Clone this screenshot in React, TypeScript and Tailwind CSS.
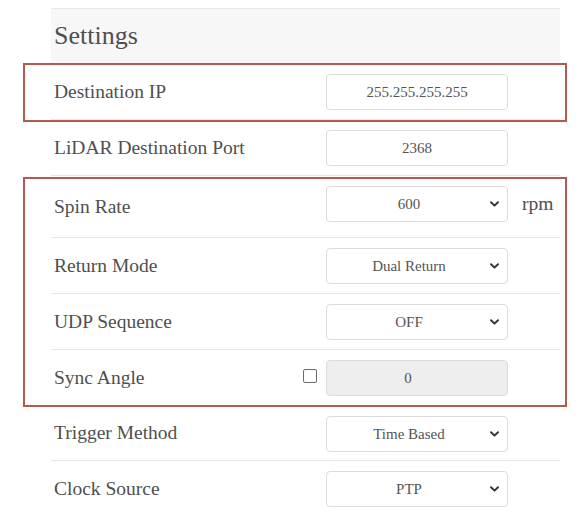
import React from "react";

function Chevron() {
  return (
    <svg width="9" height="6" viewBox="0 0 9 6" className="absolute right-[8px] top-1/2 -translate-y-1/2">
      <path d="M1 1.2 L4.5 4.6 L8 1.2" fill="none" stroke="#333" strokeWidth="1.9" strokeLinecap="round" strokeLinejoin="round" />
    </svg>
  );
}

function TextBox({ value, disabled }: { value: string; disabled?: boolean }) {
  return (
    <div
      className={
        "w-[182px] h-[36px] rounded-[4px] border border-[#dcdcdc] flex items-center justify-center text-[15px] text-[#555] " +
        (disabled ? "bg-[#eeeeee] pr-[18px]" : "bg-white")
      }
    >
      {value}
    </div>
  );
}

function SelectBox({ value }: { value: string }) {
  return (
    <div className="relative w-[182px] h-[36px] rounded-[4px] border border-[#dcdcdc] bg-white flex items-center justify-center pr-[16px] text-[15px] text-[#555]">
      {value}
      <Chevron />
    </div>
  );
}

function Row({
  label,
  children,
  h = "h-[56px]",
  extra,
  check,
  last,
}: {
  label: string;
  children: React.ReactNode;
  h?: string;
  extra?: React.ReactNode;
  check?: boolean;
  last?: boolean;
}) {
  return (
    <div className={"flex items-start pl-[3px] " + h + (last ? "" : " border-b border-[#e6e6e6]")}>
      <div className="w-[272px] h-full flex items-center">
        <span className="flex-1 text-[19.5px] text-[#4f4f4f]">{label}</span>
        {check && (
          <span className="w-[14px] h-[14px] border border-[#6b6b6b] rounded-[2px] bg-white mr-[9px] -mt-[3px]" />
        )}
      </div>
      <div className="mt-[10px] flex items-center">
        {children}
        {extra}
      </div>
    </div>
  );
}

export default function App() {
  return (
    <div className="relative w-[578px] h-[520px] bg-white overflow-hidden font-['Liberation_Serif','Times_New_Roman',serif]">
      <div className="ml-[51px] mt-[9px] w-[509px]">
        <div className="h-[56px] border-t border-[#e8e8e8] bg-[#f8f7f8] flex items-center pl-[3px] -mt-px">
          <span className="text-[26px] text-[#4f4f4f] -mt-[3px]">Settings</span>
        </div>
        <Row label="Destination IP">
          <TextBox value="255.255.255.255" />
        </Row>
        <Row label="LiDAR Destination Port">
          <TextBox value="2368" />
        </Row>
        <Row
          label="Spin Rate"
          h="h-[62px]"
          extra={<span className="ml-[14px] text-[19.5px] text-[#4f4f4f]">rpm</span>}
        >
          <SelectBox value="600" />
        </Row>
        <Row label="Return Mode">
          <SelectBox value="Dual Return" />
        </Row>
        <Row label="UDP Sequence">
          <SelectBox value="OFF" />
        </Row>
        <Row label="Sync Angle" check>
          <TextBox value="0" disabled />
        </Row>
        <Row label="Trigger Method" h="h-[55px]">
          <SelectBox value="Time Based" />
        </Row>
        <Row label="Clock Source" last>
          <SelectBox value="PTP" />
        </Row>
      </div>
      <div className="absolute left-[23px] top-[63px] w-[544px] h-[59px] border-2 border-[#b85752]" />
      <div className="absolute left-[23px] top-[177px] w-[544px] h-[230px] border-2 border-[#b85752]" />
    </div>
  );
}
